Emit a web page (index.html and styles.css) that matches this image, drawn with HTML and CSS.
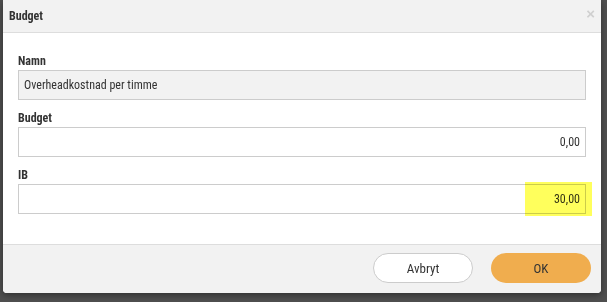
FILE: index.html
```html
<!DOCTYPE html>
<html lang="sv">
<head>
    <meta charset="UTF-8">
    <title>Budget</title>
    <link rel="stylesheet" href="styles.css">
</head>
<body>
    <div class="dialog">
        <div class="dialog-header">
            <span class="dialog-title">Budget</span>
            <span class="close">&times;</span>
        </div>
        <div class="dialog-body">
            <div class="form-group">
                <label>Namn</label>
                <div class="field readonly">Overheadkostnad per timme</div>
            </div>
            <div class="form-group">
                <label>Budget</label>
                <div class="field number">0,00</div>
            </div>
            <div class="form-group">
                <label>IB</label>
                <div class="field number">
                    30,00
                    <span class="highlight"></span>
                </div>
            </div>
        </div>
        <div class="dialog-footer">
            <button class="btn btn-cancel">Avbryt</button>
            <button class="btn btn-ok">OK</button>
        </div>
    </div>
</body>
</html>
```

FILE: styles.css
```css
body {
    margin: 0;
    padding: 0 6px 9px 3px;
    background-color: #4f4f4f;
    font-family: "Roboto Condensed", "Liberation Sans Narrow", Roboto, sans-serif;
    color: #333;
    font-size: 12px;
}
.dialog {
    background: white;
    height: 293px;
    border-radius: 0 0 4px 4px;
    box-shadow: 0 2px 6px rgba(0,0,0,0.4);
    display: flex;
    flex-direction: column;
    overflow: hidden;
}
.dialog-header {
    background-color: #f2f2f2;
    height: 33px;
    border-bottom: 1px solid #ddd;
    display: flex;
    align-items: center;
    justify-content: space-between;
    padding: 0 6px 0 6px;
    box-sizing: border-box;
}
.dialog-title {
    font-weight: bold;
    font-size: 12px;
    color: #333;
}
.close {
    color: #d0d0d0;
    font-size: 15px;
    font-weight: bold;
    font-family: Arial, sans-serif;
    line-height: 1;
    margin-top: -6px;
}
.dialog-body {
    flex: 1;
    padding: 21px 15px 0 15px;
}
.form-group {
    margin-bottom: 11px;
}
label {
    display: block;
    font-weight: bold;
    font-size: 12px;
    line-height: 14px;
    margin-bottom: 2px;
}
.field {
    position: relative;
    height: 30px;
    border: 1px solid #ccc;
    box-sizing: border-box;
    padding: 0 5px;
    display: flex;
    align-items: center;
    font-size: 12px;
}
.field.readonly {
    background-color: #f2f2f2;
}
.field.number {
    justify-content: flex-end;
}
/* marker drawn over the IB value */
.highlight {
    position: absolute;
    left: 506px;
    top: -3px;
    width: 67px;
    height: 34px;
    background-color: #ffff5c;
    mix-blend-mode: multiply;
}
.dialog-footer {
    background-color: #f2f2f2;
    border-top: 1px solid #ddd;
    height: 49px;
    box-sizing: border-box;
    display: flex;
    align-items: center;
    justify-content: flex-end;
    gap: 18px;
    padding: 0 10px 2px 0;
}
.btn {
    width: 100px;
    height: 30px;
    border-radius: 15px;
    font-family: inherit;
    font-size: 13px;
    color: #333;
    cursor: pointer;
}
.btn-cancel {
    background: white;
    border: 1px solid #ccc;
}
.btn-ok {
    background-color: #f0ad4e;
    border: none;
}
```
